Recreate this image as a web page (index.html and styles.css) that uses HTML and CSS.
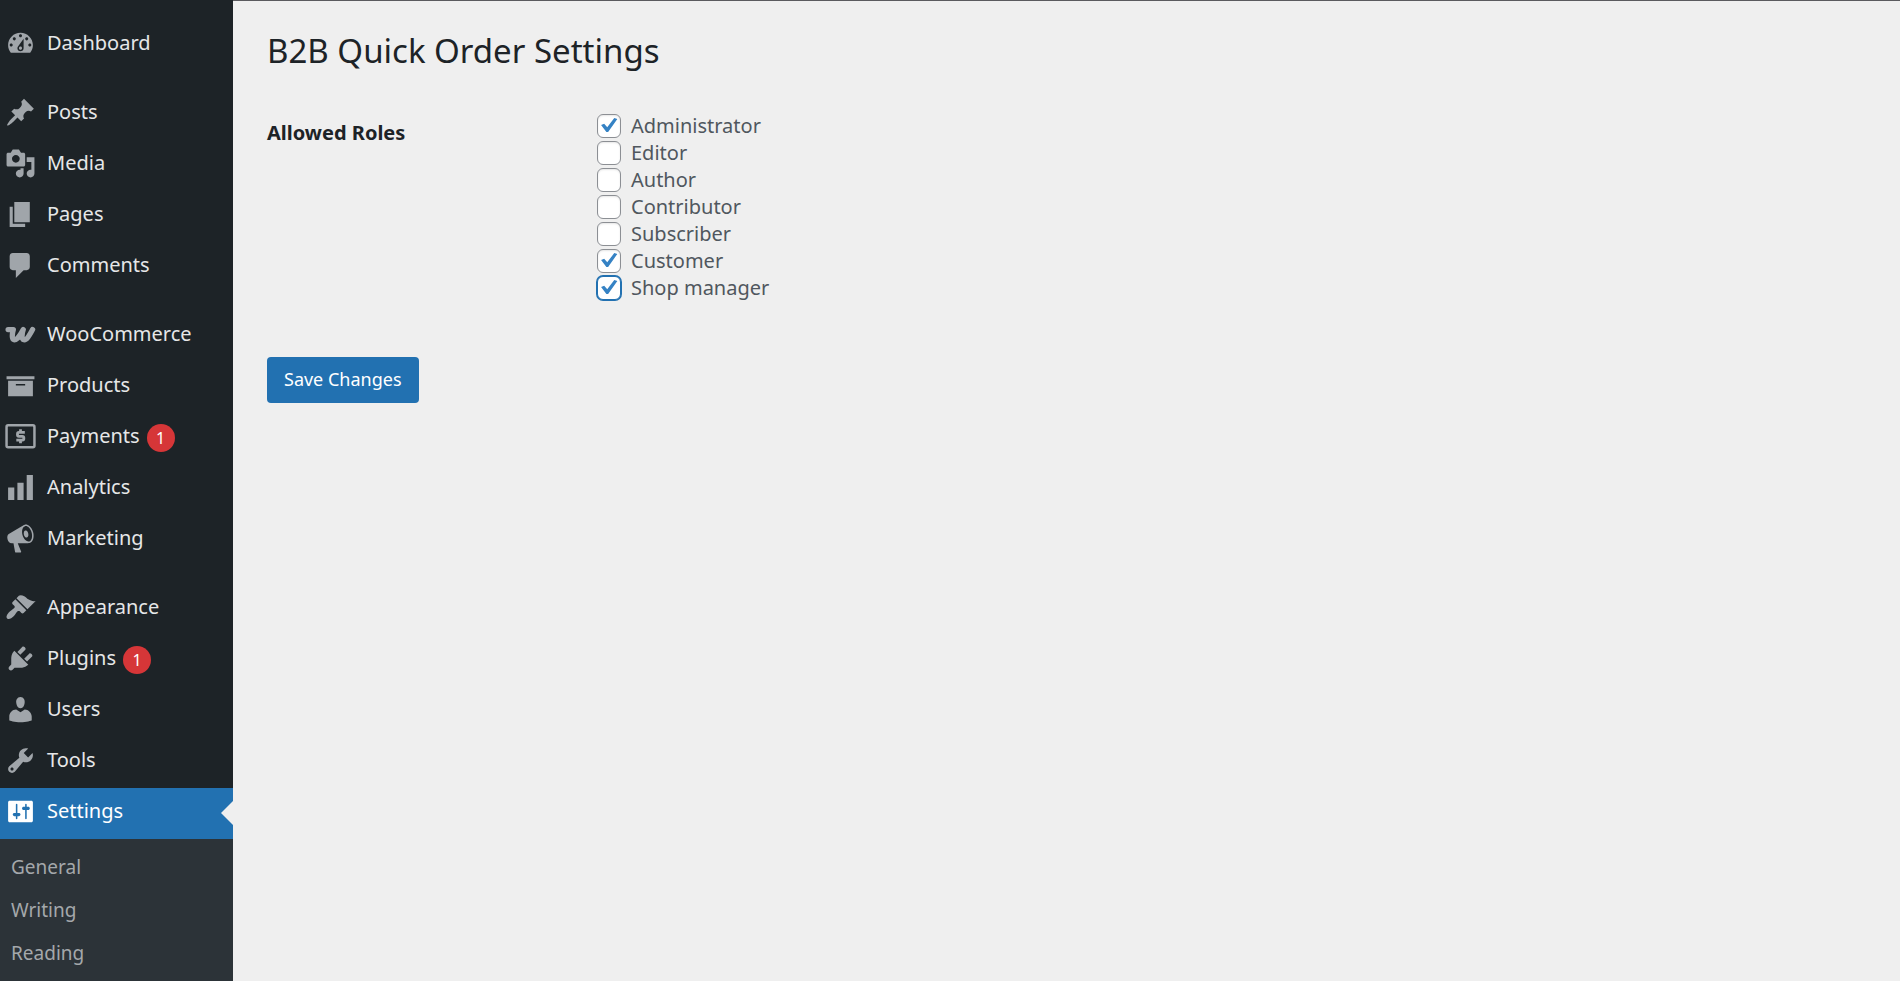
FILE: index.html
```html
<!DOCTYPE html>
<html lang="en">
<head>
<meta charset="utf-8">
<title>B2B Quick Order Settings</title>
<link rel="stylesheet" href="styles.css">
</head>
<body>
<div class="layout">
  <nav class="sidebar" aria-label="Main menu">
    <ul class="menu">
      <li><a class="item" href="#"><svg class="icon" viewBox="0 0 20 20"><path d="M3.76 16h12.48c1.1-1.37 1.76-3.11 1.76-5 0-4.42-3.58-8-8-8s-8 3.58-8 8c0 1.89.66 3.63 1.76 5zM10 4c.55 0 1 .45 1 1s-.45 1-1 1-1-.45-1-1 .45-1 1-1zM6 6c.55 0 1 .45 1 1s-.45 1-1 1-1-.45-1-1 .45-1 1-1zm8 0c.55 0 1 .45 1 1s-.45 1-1 1-1-.45-1-1 .45-1 1-1zm-5.37 5.55L12 7v6c0 1.1-.9 2-2 2s-2-.9-2-2c0-.57.24-1.08.63-1.45zM4 10c.55 0 1 .45 1 1s-.45 1-1 1-1-.45-1-1 .45-1 1-1zm12 0c.55 0 1 .45 1 1s-.45 1-1 1-1-.45-1-1 .45-1 1-1zm-5 3c0-.55-.45-1-1-1s-1 .45-1 1 .45 1 1 1 1-.45 1-1z"/></svg><span>Dashboard</span></a></li>
      <li class="group"><a class="item" href="#"><svg class="icon" viewBox="0 0 20 20"><path d="M10.44 3.02l1.82-1.82 6.36 6.35-1.83 1.82c-1.05-.68-2.48-.57-3.41.36l-.75.75c-.92.93-1.04 2.35-.35 3.41l-1.83 1.82-2.41-2.41-2.8 2.79c-.42.42-3.38 2.71-3.8 2.29s1.86-3.39 2.28-3.81l2.79-2.79L4.1 9.36l1.83-1.82c1.05.69 2.48.57 3.4-.36l.75-.75c.93-.92 1.05-2.35.36-3.41z"/></svg><span>Posts</span></a></li>
      <li><a class="item" href="#"><svg class="icon" viewBox="0 0 20 20"><path d="M13 11V4c0-.55-.45-1-1-1h-1.67L9 1H5L3.67 3H2c-.55 0-1 .45-1 1v7c0 .55.45 1 1 1h10c.55 0 1-.45 1-1zM7 4.5c1.38 0 2.5 1.12 2.5 2.5S8.38 9.5 7 9.5 4.5 8.38 4.5 7 5.62 4.5 7 4.5zM14 6h5v10.5c0 1.38-1.12 2.5-2.5 2.5S14 17.88 14 16.5s1.12-2.5 2.5-2.5c.17 0 .34.02.5.05V9h-3V6zm-4 8.05V13h2v3.5c0 1.38-1.12 2.5-2.5 2.5S7 17.88 7 16.5 8.12 14 9.5 14c.17 0 .34.02.5.05z"/></svg><span>Media</span></a></li>
      <li><a class="item" href="#"><svg class="icon" viewBox="0 0 20 20"><path d="M6 15V2h10v13H6zm-1 1h8v2H3V5h2v11z"/></svg><span>Pages</span></a></li>
      <li><a class="item" href="#"><svg class="icon" viewBox="0 0 20 20"><path d="M5 2h9c1.1 0 2 .9 2 2v7c0 1.1-.9 2-2 2h-2l-5 5v-5H5c-1.1 0-2-.9-2-2V4c0-1.1.9-2 2-2z"/></svg><span>Comments</span></a></li>
      <li class="group"><a class="item" href="#"><svg class="icon" viewBox="0 0 20 20"><path fill="none" stroke="currentColor" stroke-width="3.4" stroke-linecap="round" stroke-linejoin="round" d="M2 6.800h3.400C4.600 9.500 4.200 13 5.800 13.400C7.600 13.700 10.200 10 11.800 6.800C10.800 9.800 10.600 13 12.200 13.400C14 13.800 16 10 17.800 6.800"/></svg><span>WooCommerce</span></a></li>
      <li><a class="item" href="#"><svg class="icon" viewBox="0 0 20 20"><path d="M19 4v2H1V4h18zM2 7h16v10H2V7zm11 3V9H7v1h6z"/></svg><span>Products</span></a></li>
      <li><a class="item" href="#"><svg class="icon" viewBox="0 0 20 20"><g fill="none" stroke="currentColor"><rect x="1" y="2.800" width="18" height="14.200" rx="1" stroke-width="1.600"/><path stroke-width="1.800" d="M12.800 7.400H9c-1.300 0-1.300 2.500 0 2.500h2.200c1.300 0 1.300 2.500 0 2.500H7.300M10 5.400v2M10 12.400v2"/></g></svg><span>Payments</span><span class="badge">1</span></a></li>
      <li><a class="item" href="#"><svg class="icon" viewBox="0 0 20 20"><path d="M18 18V2h-4v16h4zm-6 0V7H8v11h4zm-6 0v-8H2v8h4z"/></svg><span>Analytics</span></a></li>
      <li><a class="item" href="#"><svg class="icon" viewBox="0 0 20 20"><path d="M18.150 5.940c.46 1.620.38 3.220-.02 4.480-.42 1.280-1.260 2.180-2.300 2.480-.16.06-.26.06-.4.06-.06.02-.12.02-.18.02-.06.02-.14.02-.22.02h-6.800l2.220 5.500c.02.14-.06.26-.14.34-.08.1-.24.16-.34.16H6.950c-.1 0-.26-.06-.34-.16-.08-.08-.16-.2-.14-.34l-1-5.500H4.250l-.02-.02c-.5.06-1.080-.18-1.540-.62s-.88-1.080-1.060-1.880c-.24-.8-.2-1.560-.02-2.200.18-.62.58-1.080 1.060-1.300l.02-.02 9-5.400c.1-.06.18-.1.24-.16.06-.04.14-.08.24-.12.16-.08.28-.12.5-.18 1.040-.3 2.240.1 3.220.98s1.840 2.240 2.260 3.860zm-2.580 5.980h-.02c.4-.1.74-.34 1.040-.7.58-.7.86-1.760.86-3.040 0-.64-.1-1.300-.28-1.980-.34-1.360-1.020-2.500-1.780-3.240s-1.680-1.100-2.460-.88c-.82.22-1.400.96-1.700 2-.32 1.040-.28 2.360.06 3.720.38 1.360 1 2.500 1.800 3.240.78.74 1.620 1.100 2.480.88zm-2.540-7.080c.22-.04.42-.02.62.04.38.16.76.48 1.020 1s.42 1.200.42 1.780c0 .3-.04.56-.12.8-.18.48-.44.84-.86.94-.34.1-.8-.06-1.140-.4s-.64-.86-.78-1.500c-.18-.62-.12-1.240.02-1.720s.48-.84.82-.94z"/></svg><span>Marketing</span></a></li>
      <li class="group"><a class="item" href="#"><svg class="icon" viewBox="0 0 20 20"><path d="M14.480 11.060L7.410 3.990l1.500-1.500c.5-.56 2.300-.47 3.510.32 1.210.8 1.430 1.280 2.910 2.100 1.180.64 2.450 1.260 4.450.85zm-.71.71L6.700 4.700 4.930 6.470c-.39.39-.39 1.020 0 1.410l1.060 1.060c.39.39.39 1.030 0 1.420-.6.6-1.430 1.110-2.210 1.690-.35.26-.7.53-1.010.84C1.430 14.230.4 16.080 1.400 17.070c.99 1 2.840-.03 4.180-1.360.31-.31.58-.66.85-1.020.57-.78 1.080-1.610 1.690-2.210.39-.39 1.020-.39 1.410 0l1.060 1.060c.39.39 1.020.39 1.410 0z"/></svg><span>Appearance</span></a></li>
      <li><a class="item" href="#"><svg class="icon" viewBox="0 0 20 20"><path d="M13.110 4.360L9.870 7.600 8 5.730l3.240-3.240c.35-.34 1.050-.2 1.560.32.52.51.66 1.210.31 1.550zm-8 1.770l.91-1.120 9.010 9.010-1.190.84c-.71.71-2.630 1.160-3.820 1.160H6.140L4.900 17.260c-.59.59-1.540.59-2.120 0-.59-.58-.59-1.530 0-2.120l1.240-1.240v-3.880c0-1.130.4-3.190 1.090-3.890zm7.260 3.970l3.240-3.240c.34-.35 1.040-.21 1.550.31.52.51.66 1.210.31 1.550l-3.240 3.250z"/></svg><span>Plugins</span><span class="badge">1</span></a></li>
      <li><a class="item" href="#"><svg class="icon" viewBox="0 0 20 20"><path d="M10 9.250c-2.270 0-2.730-3.440-2.730-3.440C7 4.020 7.820 2 9.970 2c2.160 0 2.980 2.020 2.710 3.810 0 0-.41 3.440-2.680 3.440zm0 2.570L12.720 10c2.390 0 4.520 2.330 4.520 4.530v2.490s-3.650 1.130-7.240 1.130c-3.650 0-7.240-1.130-7.240-1.130v-2.490c0-2.250 1.940-4.480 4.470-4.480z"/></svg><span>Users</span></a></li>
      <li><a class="item" href="#"><svg class="icon" viewBox="0 0 20 20"><path d="M16.680 9.770c-1.340 1.340-3.300 1.670-4.950.99l-5.410 6.520c-.99.99-2.590.99-3.580 0s-.99-2.590 0-3.570l6.520-5.420c-.68-1.650-.35-3.610.99-4.950 1.280-1.280 3.120-1.620 4.720-1.060l-2.890 2.890 2.820 2.820 2.860-2.870c.53 1.580.18 3.390-1.080 4.650zM3.810 16.210c.4.39 1.040.39 1.430 0 .4-.4.4-1.040 0-1.430-.39-.4-1.030-.4-1.430 0-.39.39-.39 1.030 0 1.430z"/></svg><span>Tools</span></a></li>
      <li><a class="item current" href="#" aria-current="page"><svg class="icon" viewBox="0 0 20 20"><path d="M18 16V4c0-.55-.45-1-1-1H3c-.55 0-1 .45-1 1v12c0 .55.45 1 1 1h14c.55 0 1-.45 1-1zM8 11h1c.55 0 1 .45 1 1s-.45 1-1 1H8v1.500c0 .28-.22.5-.5.5s-.5-.22-.5-.5V13H6c-.55 0-1-.45-1-1s.45-1 1-1h1V5.500c0-.28.22-.5.5-.5s.5.22.5.5V11zm5-2h-1c-.55 0-1-.45-1-1s.45-1 1-1h1V5.500c0-.28.22-.5.5-.5s.5.22.5.5V7h1c.55 0 1 .45 1 1s-.45 1-1 1h-1v5.500c0 .28-.22.5-.5.5s-.5-.22-.5-.5V9z"/></svg><span>Settings</span></a></li>
    </ul>
    <ul class="submenu">
      <li><a href="#">General</a></li>
      <li><a href="#">Writing</a></li>
      <li><a href="#">Reading</a></li>
    </ul>
  </nav>
  <main class="content">
    <h1>B2B Quick Order Settings</h1>
    <form>
      <fieldset class="field" aria-labelledby="roles-title">
        <div class="field-title" id="roles-title">Allowed Roles</div>
        <div class="roles">
          <label><input type="checkbox" checked><span>Administrator</span></label>
          <label><input type="checkbox"><span>Editor</span></label>
          <label><input type="checkbox"><span>Author</span></label>
          <label><input type="checkbox"><span>Contributor</span></label>
          <label><input type="checkbox"><span>Subscriber</span></label>
          <label><input type="checkbox" checked><span>Customer</span></label>
          <label><input type="checkbox" class="focused" checked><span>Shop manager</span></label>
        </div>
      </fieldset>
      <button type="submit" class="save">Save Changes</button>
    </form>
  </main>
</div>
</body>
</html>
```
FILE: styles.css
```css
* {
  box-sizing: border-box;
}

body {
  margin: 0;
  background: #efefef;
  color: #1d2327;
  font: 20px/28px "Noto Sans", "Open Sans", sans-serif;
}

ul {
  list-style: none;
  margin: 0;
  padding: 0;
}

a {
  color: inherit;
  text-decoration: none;
}

.layout {
  display: flex;
  min-height: 100vh;
}

.sidebar {
  display: flex;
  flex-direction: column;
  flex: 0 0 233px;
  background: #1d2327;
  color: #e6e7e8;
}

.menu {
  padding-top: 20px;
}

.group {
  margin-top: 18px;
}

.item {
  position: relative;
  display: flex;
  align-items: center;
  height: 51px;
  padding: 0 5px 6px;
}

.icon {
  flex: none;
  width: 31px;
  height: 31px;
  margin: 2px 11px 0 0;
  fill: currentColor;
  color: #a0a5aa;
}

.badge {
  width: 28px;
  height: 28px;
  margin: 4px 0 0 7px;
  border-radius: 50%;
  background: #d63638;
  color: #fff;
  font-size: 16px;
  text-align: center;
}

.current {
  background: #2271b1;
  color: #fff;
}

.current .icon {
  color: #fff;
}

.current::after {
  content: "";
  position: absolute;
  right: 0;
  top: 50%;
  margin-top: -13px;
  border: solid transparent;
  border-width: 12px 12px 12px 0;
  border-right-color: #efefef;
}

.submenu {
  flex: 1;
  padding: 7px 0 0;
  background: #2c3338;
  color: #a4a8ab;
  font-size: 19px;
}

.submenu a {
  display: block;
  padding: 0 11px;
  line-height: 43px;
}

.content {
  flex: 1;
  min-width: 0;
  padding: 28px 34px;
  border-top: 1px solid #5a5a5e;
}

h1 {
  margin: 0;
  font-size: 33px;
  font-weight: 400;
  line-height: 44px;
}

.field {
  display: grid;
  grid-template-columns: 329px 1fr;
  margin: 0;
  padding: 39px 0 56px;
  border: 0;
}

.field-title {
  padding-top: 7px;
  font-weight: 700;
}

.roles {
  display: grid;
  justify-items: start;
  color: #50575e;
}

.roles label {
  display: flex;
  align-items: center;
  gap: 10px;
  height: 27px;
  padding-left: 1px;
}

.roles input {
  appearance: none;
  width: 24px;
  height: 24px;
  margin: 0;
  border: 1px solid #8c8f94;
  border-radius: 6px;
  background: #fff;
  box-shadow: inset 0 1px 2px rgba(0, 0, 0, .1);
}

.roles input:checked::before {
  content: "";
  display: block;
  width: 22px;
  height: 22px;
  background: #3582c4;
  clip-path: polygon(14% 48%, 28% 42%, 42% 58%, 74% 16%, 88% 20%, 46% 80%, 38% 80%);
}

.roles .focused {
  border-color: #2271b1;
  box-shadow: 0 0 0 1px #2271b1;
}

.save {
  height: 46px;
  padding: 0 17px 2px;
  border: 0;
  border-radius: 4px;
  background: #2271b1;
  color: #fff;
  font: inherit;
  font-size: 18px;
}
```
